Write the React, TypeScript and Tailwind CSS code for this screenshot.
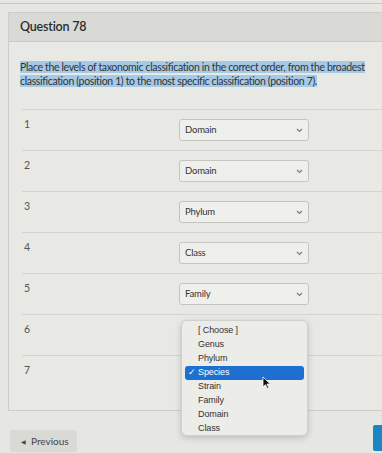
import React from 'react'

const answers = ['Domain', 'Domain', 'Phylum', 'Class', 'Family', '', '']
const options = ['[ Choose ]', 'Genus', 'Phylum', 'Species', 'Strain', 'Family', 'Domain', 'Class']

const Chevron = () => (
  <svg width="7" height="5" viewBox="0 0 7 5" className="shrink-0">
    <path d="M1 1l2.5 2.5L6 1" fill="none" stroke="#7a7a78" strokeWidth="1.1" />
  </svg>
)

const SelectBox = ({value}: {value: string}) => (
  <div className="w-[130px] h-[22px] flex items-center justify-between pl-[5px] pr-[5px] bg-[#efefec] border border-[#c4c5c1] rounded-[3px] text-[9.5px] tracking-[-0.2px] text-[#333]">
    <span>{value}</span>
    <Chevron />
  </div>
)

const App = () => {
  return (
    <div className="relative w-[382px] h-[453px] overflow-hidden bg-[#e6e7e3] font-['Lato','Noto_Sans',sans-serif]">
      <div className="mt-[3px] h-[9px] border-t border-[#c6c7c3]" />

      {/* question card */}
      <div className="ml-[8px] w-[420px] border border-[#cdcec9] bg-[#e8e9e5]">
        <div className="h-[29px] flex items-center pl-[11px] bg-[#d9dad6] border-b border-[#cacbc6] text-[12.5px] tracking-[-0.2px] font-semibold text-[#2b2b2b]">
          Question 78
        </div>
        <div className="pl-[11px] pt-[18px] pb-[14px]">
          <p className="whitespace-nowrap text-[10.5px] tracking-[-0.35px] leading-[14px] text-[#333]">
            <span className="bg-[#a6c9e6]">
              Place the levels of taxonomic classification in the correct order, from the broadest
            </span>
            <br />
            <span className="bg-[#a6c9e6]">
              classification (position 1) to the most specific classification (position 7).
            </span>
          </p>
          <div className="mt-[21px] ml-[2px]">
            {answers.map((a, i) => (
              <div key={i} className="flex h-[41px] pt-[9px] border-t border-[#d3d4cf]">
                <div className="w-[157px] pl-[2px] text-[10.5px] leading-[10px] text-[#555]">{i + 1}</div>
                {a && <SelectBox value={a} />}
              </div>
            ))}
          </div>
        </div>
      </div>

      <div className="mt-[19px] ml-[10px] w-[67px] h-[22px] flex items-center gap-[5px] pl-[11px] bg-[#d9dad6] rounded-[2px] text-[10px] text-[#444]">
        <span className="text-[6px]">◀</span>
        <span>Previous</span>
      </div>
      <div className="absolute left-[373px] top-[425px] w-[20px] h-[26px] bg-[#1b86c2] rounded-[2px]" />

      {/* open dropdown over row 6 */}
      <div className="absolute left-[181px] top-[320px] w-[127px] h-[116px] pt-[3px] bg-[#ecece9] border border-[#d0d0cc] rounded-[6px] shadow-[0_2px_6px_rgba(0,0,0,0.18)] text-[9px] tracking-[-0.1px] text-[#333] font-['Liberation_Sans',sans-serif]">
        {options.map(o =>
          o === 'Species' ? (
            <div key={o} className="mx-[3px] h-[14px] flex items-center rounded-[3px] bg-[#1d6fd0] text-white">
              <span className="w-[13px] pl-[3px] text-[9px]">✓</span>
              <span>{o}</span>
            </div>
          ) : (
            <div key={o} className="h-[14px] flex items-center pl-[16px]">
              {o}
            </div>
          )
        )}
      </div>

      {/* mouse pointer */}
      <svg className="absolute left-[262px] top-[376px]" width="9" height="13" viewBox="0 0 9 13">
        <path d="M1 1v10l2.5-2.3 1.8 3.8 1.5-.7-1.8-3.7H8.3z" fill="#111" stroke="#fff" strokeWidth="0.8" />
      </svg>
    </div>
  )
}

export default App
